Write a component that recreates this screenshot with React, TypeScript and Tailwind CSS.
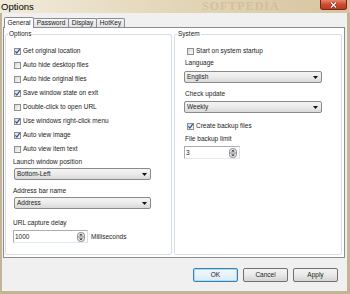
import React from 'react';

const font = "font-['Liberation_Sans',Arial,sans-serif]";

const Check = ({ on }: { on?: boolean }) => (
  <span className="flex h-[7px] w-[7px] shrink-0 items-center justify-center border border-[#8e8f8f] bg-gradient-to-br from-[#d9d9d9] to-[#fbfbfb]">
    {on && (
      <svg width="5" height="5" viewBox="0 0 5 5" className="overflow-visible">
        <path d="M0.4 2.4 L1.9 4.1 L4.7 0.2" fill="none" stroke="#2d4f9c" strokeWidth="1.2" />
      </svg>
    )}
  </span>
);

const CheckRow = ({ label, on, className = '' }: { label: string; on?: boolean; className?: string }) => (
  <label className={`flex h-[14px] items-center gap-[2px] ${className}`}>
    <Check on={on} />
    <span>{label}</span>
  </label>
);

const Arrow = () => (
  <svg width="5" height="3" viewBox="0 0 5 3">
    <path d="M0 0 H5 L2.5 3 Z" fill="#111" />
  </svg>
);

const Combo = ({ value, className = '' }: { value: string; className?: string }) => (
  <div
    className={`flex h-[12px] items-center justify-between rounded-[2px] border border-[#8a8a8a] bg-gradient-to-b from-[#f4f4f4] via-[#ebebeb] to-[#d9d9d9] pl-[2px] pr-[3px] ${className}`}
  >
    <span>{value}</span>
    <Arrow />
  </div>
);

const Spin = () => (
  <svg width="8" height="10" viewBox="0 0 8 10">
    <rect x="0.5" y="0.5" width="7" height="9" rx="3" fill="#e6e6e6" stroke="#8d8d8d" />
    <line x1="1" y1="5" x2="7" y2="5" stroke="#8d8d8d" />
    <path d="M2.2 3.6 H5.8 L4 1.8 Z" fill="#222" />
    <path d="M2.2 6.4 H5.8 L4 8.2 Z" fill="#222" />
  </svg>
);

const Spinner = ({ value, className = '' }: { value: string; className?: string }) => (
  <div className={`flex h-[13px] items-center justify-between border border-[#abadb3] border-b-[#e3e9ef] border-r-[#dbdfe6] bg-white pl-[1px] pr-[2px] ${className}`}>
    <span>{value}</span>
    <Spin />
  </div>
);

const Btn = ({ label, focus }: { label: string; focus?: boolean }) => (
  <button
    className={`flex h-[14px] w-[45px] items-center justify-center rounded-[2px] border ${
      focus
        ? 'border-[#3c7fb1] bg-gradient-to-b from-[#f2f9fd] to-[#d9ecf8] shadow-[inset_0_0_0_1px_#a9dcf6]'
        : 'border-[#707070] bg-gradient-to-b from-[#f3f3f3] via-[#e9e9e9] to-[#d4d4d4]'
    }`}
  >
    {label}
  </button>
);

export default function App() {
  return (
    <div className={`flex h-[294px] w-[350px] flex-col overflow-hidden bg-[#c4b493] ${font} text-[6.5px] leading-[8px] text-[#1b1b1b]`}>
      {/* title bar */}
      <div className="relative flex h-[13px] bg-gradient-to-r from-[#f1ebda] via-[#e3d6b8] to-[#d6c5a0]">
        <span className="absolute left-[202px] top-0 font-['Liberation_Serif',serif] text-[12px] leading-[12px] font-bold tracking-[1px] text-[#c6b088]/50">
          SOFTPEDIA
        </span>
        <span className="relative pl-[1px] pt-[1px] text-[9.5px] leading-[11px] text-black">Options</span>
        <div className="relative ml-auto mr-[3px] flex h-[10px] w-[27px] items-center justify-center rounded-b-[3px] border border-t-0 border-[#6e2a1d] bg-gradient-to-b from-[#e8826b] via-[#cf4b30] to-[#c2391e]">
          <svg width="7" height="6" viewBox="0 0 7 6">
            <path d="M1 0.5 L6 5.5 M6 0.5 L1 5.5" stroke="#5a1a10" strokeWidth="2.4" />
            <path d="M1 0.5 L6 5.5 M6 0.5 L1 5.5" stroke="#fff" strokeWidth="1.4" />
          </svg>
        </div>
      </div>

      {/* client */}
      <div className="ml-[2px] flex h-[278px] w-[345px] flex-col bg-[#f0f0f0]">
        {/* tabs */}
        <div className="relative z-10 flex h-[14px] items-end pl-[2px]">
          <div className="-mb-px flex h-[11px] w-[30px] items-center justify-center rounded-t-[2px] border border-b-0 border-[#898c95] bg-white">
            General
          </div>
          {['Password', 'Display', 'HotKey'].map((t, i) => (
            <div
              key={t}
              className={`-ml-px flex h-[9px] items-center justify-center rounded-t-[2px] border border-b-0 border-[#898c95] bg-gradient-to-b from-[#f5f5f5] to-[#e2e2e2] ${
                i === 0 ? 'w-[36px]' : 'w-[29px]'
              }`}
            >
              {t}
            </div>
          ))}
        </div>

        {/* panel */}
        <div className="ml-[1px] flex h-[231px] w-[342px] gap-[2px] border border-[#898c95] bg-white pl-[1px] pt-[2px]">
          <fieldset className="h-[225px] w-[167px] rounded-[2px] border border-[#d5dfe5] p-0">
            <legend className="ml-[2px] px-[1px]">Options</legend>
            <div className="flex flex-col pl-[8px] pt-[6px]">
              <CheckRow label="Get original location" on />
              <CheckRow label="Auto hide desktop files" />
              <CheckRow label="Auto hide original files" />
              <CheckRow label="Save window state on exit" on />
              <CheckRow label="Double-click to open URL" />
              <CheckRow label="Use windows right-click menu" on />
              <CheckRow label="Auto view image" on />
              <CheckRow label="Auto view item text" />
            </div>
            <div className="flex flex-col pl-[7px]">
              <span className="mt-[2px]">Launch window position</span>
              <Combo value="Bottom-Left" className="ml-[1px] mt-[2px] w-[137px]" />
              <span className="mt-[7px]">Address bar name</span>
              <Combo value="Address" className="ml-[1px] mt-[2px] w-[137px]" />
              <span className="mt-[10px]">URL capture delay</span>
              <div className="mt-[3px] flex items-center gap-[3px]">
                <Spinner value="1000" className="w-[75px]" />
                <span>Milliseconds</span>
              </div>
            </div>
          </fieldset>

          <fieldset className="h-[225px] w-[168px] rounded-[2px] border border-[#d5dfe5] p-0">
            <legend className="ml-[2px] px-[1px]">System</legend>
            <div className="flex flex-col pl-[10px] pt-[6px]">
              <CheckRow label="Start on system startup" className="ml-[2px]" />
              <span className="mt-[1px]">Language</span>
              <Combo value="English" className="-ml-[1px] mt-[4px] w-[138px]" />
              <span className="mt-[7px]">Check update</span>
              <Combo value="Weekly" className="-ml-[1px] mt-[3px] w-[138px]" />
              <CheckRow label="Create backup files" on className="ml-[2px] mt-[6px]" />
              <span className="mt-[2px]">File backup limit</span>
              <Spinner value="3" className="-ml-[1px] mt-[3px] w-[56px]" />
            </div>
          </fieldset>
        </div>

        {/* buttons */}
        <div className="mt-[10px] flex justify-end gap-[5px] pr-[9px]">
          <Btn label="OK" focus />
          <Btn label="Cancel" />
          <Btn label="Apply" />
        </div>
      </div>
    </div>
  );
}
